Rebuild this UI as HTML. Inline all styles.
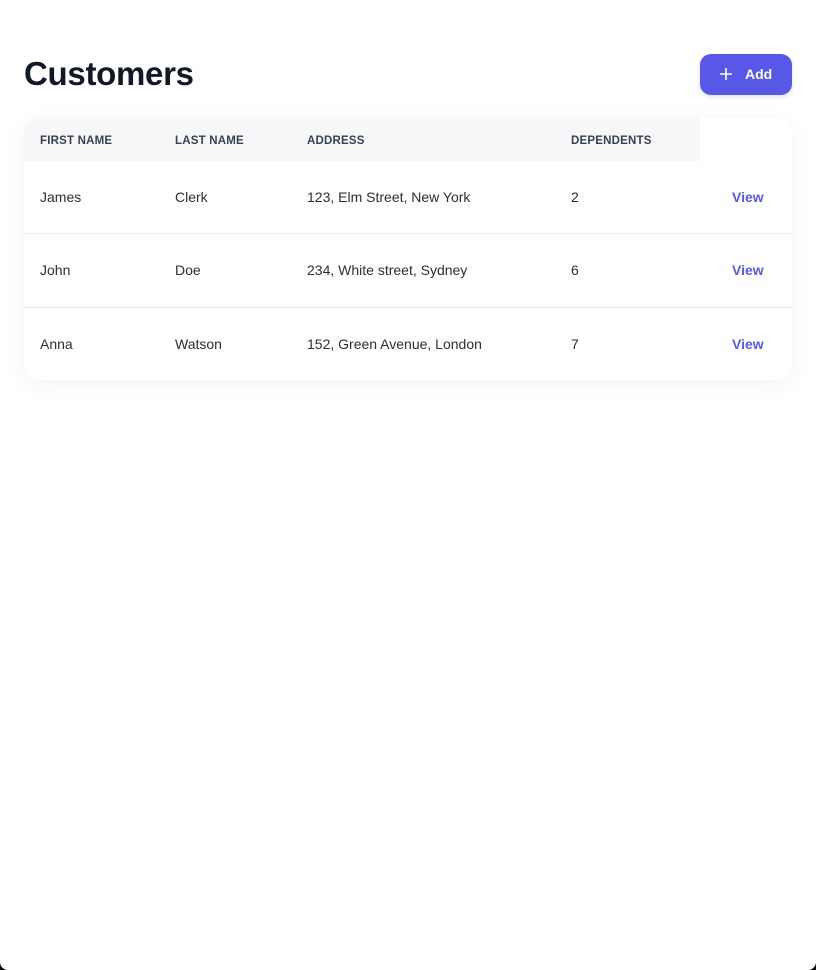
<!DOCTYPE html>
<html><head><style>
html,body{margin:0;padding:0;background:#000;}
.page{width:816px;height:970px;background:#fff;border-radius:0 0 8px 8px;position:relative;font-family:"Liberation Sans",sans-serif;overflow:hidden;}
h1{position:absolute;left:24px;top:55px;margin:0;font-size:33px;font-weight:700;color:#111827;letter-spacing:-0.3px;}
.btn{position:absolute;left:700px;top:54px;width:92px;height:41px;background:#5858e8;border-radius:11px;color:#fff;font-weight:700;font-size:14px;box-shadow:0 2px 4px rgba(0,0,0,.12);}
.card{position:absolute;left:24px;top:118px;width:768px;height:262px;border-radius:16px;background:#fff;box-shadow:0 4px 24px rgba(0,0,0,.05);overflow:hidden;}
.hdr{position:absolute;left:0;top:0;width:676px;height:43px;background:#f7f7f9;}
.t{position:absolute;font-size:14px;color:#2d2d35;}
.h{position:absolute;font-size:11.5px;font-weight:700;color:#374151;top:17px;letter-spacing:.2px;}
.line{position:absolute;left:0;width:768px;height:1px;background:#ececef;}
.v{position:absolute;left:708px;font-size:14px;font-weight:700;color:#5858e8;}
</style></head><body><div class="page">
<h1>Customers</h1>
<div class="btn"><svg style="position:absolute;left:19px;top:13px" width="14" height="14" viewBox="0 0 14 14"><path d="M7 1v12M1 7h12" stroke="#fff" stroke-width="1.6" fill="none"/></svg><span style="position:absolute;left:45px;top:12px">Add</span></div>
<div class="card">
<div class="hdr"></div>
<div class="h" style="left:16px">FIRST NAME</div>
<div class="h" style="left:151px">LAST NAME</div>
<div class="h" style="left:283px">ADDRESS</div>
<div class="h" style="left:547px">DEPENDENTS</div>
<div class="t" style="left:16px;top:71px">James</div><div class="t" style="left:151px;top:71px">Clerk</div><div class="t" style="left:283px;top:71px">123, Elm Street, New York</div><div class="t" style="left:547px;top:71px">2</div><div class="v" style="top:71px">View</div>
<div class="line" style="top:115px"></div>
<div class="t" style="left:16px;top:144px">John</div><div class="t" style="left:151px;top:144px">Doe</div><div class="t" style="left:283px;top:144px">234, White street, Sydney</div><div class="t" style="left:547px;top:144px">6</div><div class="v" style="top:144px">View</div>
<div class="line" style="top:189px"></div>
<div class="t" style="left:16px;top:218px">Anna</div><div class="t" style="left:151px;top:218px">Watson</div><div class="t" style="left:283px;top:218px">152, Green Avenue, London</div><div class="t" style="left:547px;top:218px">7</div><div class="v" style="top:218px">View</div>
</div>
</div></body></html>
